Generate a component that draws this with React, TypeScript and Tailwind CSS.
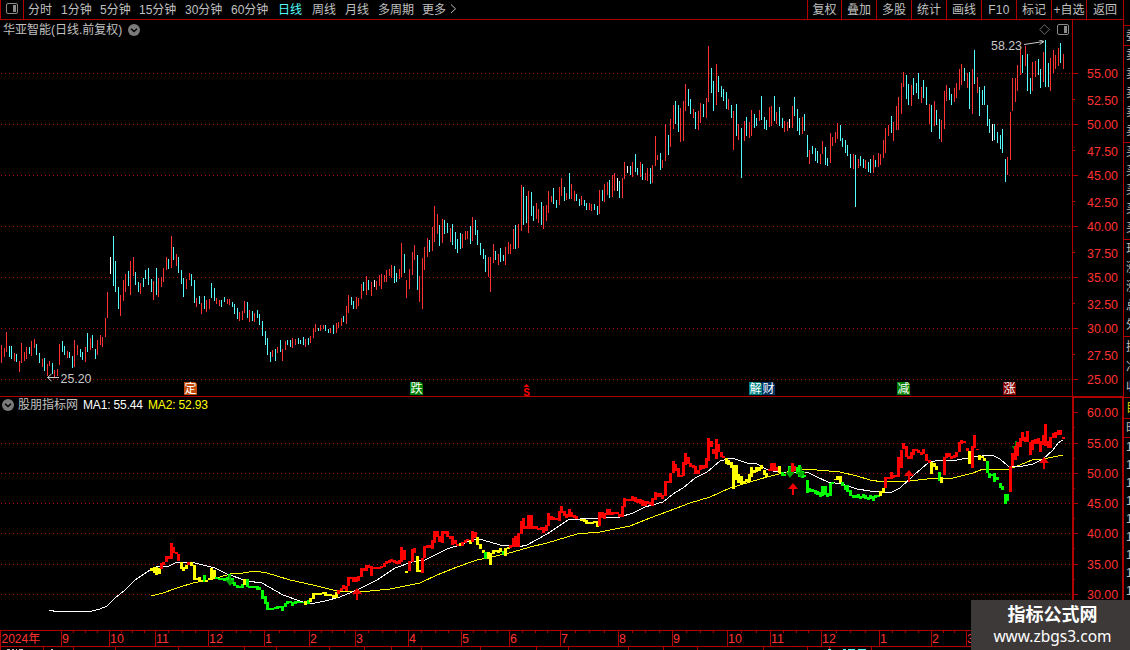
import React from "react";

const SANS = '"Liberation Sans","Noto Sans CJK SC",sans-serif';

// Each entry: colour code, x, high, low
const PRICE = `
r1,345,363 r4,348,357 r6,332,352 c9,346,357 c11,346,359 r14,353,361 c16,354,362 r19,361,372 r21,343,363 r24,352,361
r26,347,359 c29,347,354 r31,341,356 r34,339,348 c36,344,355 c39,353,363 r42,359,367 c44,358,371 r47,364,376 r49,361,366
c52,363,374 r54,370,377 r57,369,376 r59,344,365 c62,341,352 c64,346,355 r67,351,358 c69,352,358 c72,356,368 r74,340,367
r77,345,355 c80,349,357 c82,352,360 r85,347,362 c87,333,352 r90,338,350 c92,335,348 c95,349,359 r97,340,355 r100,335,345
r102,337,347 r105,318,337 r107,292,318 w110,257,274 c113,236,286 c115,261,292 c118,287,309 r120,295,316 r123,280,301
r125,274,292 c128,271,286 r130,261,295 r133,257,276 c135,272,285 c138,282,292 r140,283,294 c143,278,287 c145,270,279
c148,268,285 c151,279,292 r153,281,300 c156,268,295 r158,278,297 r161,277,287 r163,268,282 r166,257,270 c168,259,269
r171,236,268 c173,247,260 r176,254,266 c178,257,273 c181,270,284 c183,278,297 r186,279,289 r189,273,280 c191,274,286
c194,280,303 r196,298,307 c199,296,304 r201,303,314 c204,296,309 r206,300,312 r209,299,309 c211,283,298 c214,288,301
r216,298,304 r219,300,306 c221,300,307 c224,297,302 r227,299,304 r229,299,305 c232,302,307 c234,304,314 c237,308,319
r239,312,321 r242,311,320 r244,301,313 c247,302,318 r249,310,322 c252,311,321 r254,313,322 c257,310,318 c259,314,325
c262,321,336 c265,331,345 c267,338,355 c270,352,362 r272,350,357 c275,349,361 r277,347,353 c280,340,352 r282,349,361
r285,341,350 c287,340,345 c290,340,347 r292,338,348 r295,339,345 c298,338,344 c300,340,344 c303,337,345 r305,339,347
c308,338,345 r310,336,343 r313,328,338 r315,324,332 c318,328,331 r320,325,331 r323,325,329 c325,325,331 c328,329,333
r330,328,333 c333,325,334 r336,323,333 r338,322,328 r341,318,326 c343,316,322 r346,306,324 r348,295,313 c351,297,305
c353,301,309 r356,297,309 r358,298,306 r361,284,299 c363,282,291 r366,276,295 c368,280,290 r371,282,296 w374,280,287
r376,281,290 r379,275,286 r381,274,289 r384,275,282 r386,270,282 r389,269,276 r391,265,278 c394,266,283 c396,273,282
r399,269,279 r401,243,277 c404,254,273 r406,280,298 r409,269,289 r412,252,275 r414,245,260 c417,255,290 r419,276,302
r422,258,309 r424,247,270 r427,238,257 c429,240,252 r432,227,251 r434,206,242 r437,214,234 c439,225,246 r442,219,243
c444,220,234 c447,223,233 r450,228,242 c452,224,245 c455,232,249 c457,239,253 c460,233,249 r462,234,248 r465,231,240
r467,231,239 c470,226,244 r472,217,241 c475,220,235 c477,230,245 c480,243,255 c483,249,259 c485,255,272 r488,257,277
r490,257,292 r493,244,263 c495,251,260 r498,254,265 c500,248,262 c503,255,261 r505,247,265 r508,242,254 r510,244,254
r513,229,249 c515,225,249 r518,224,248 r521,185,231 c523,187,225 c526,196,223 r528,191,233 c531,192,216 c533,206,221
r536,203,219 r538,209,223 c541,202,225 r543,206,229 r546,205,221 r548,191,213 r551,196,202 c553,188,204 c556,200,208
r559,187,205 r561,178,196 c564,187,201 r566,193,200 c569,173,199 r571,184,199 r574,191,201 c576,194,201 c579,199,206
r581,196,205 c584,200,206 c586,203,210 r589,203,210 r591,204,211 c594,204,210 c597,206,215 r599,190,214 c602,190,201
r604,184,202 r607,182,195 c609,180,198 r612,175,197 r614,173,191 w617,178,191 c619,181,198 r622,178,198 r624,162,179
w627,166,173 c630,166,175 r632,162,177 c635,154,172 c637,168,175 r640,162,177 c642,164,180 r645,173,180 r647,168,181
c650,168,184 r652,165,183 r655,136,166 r657,155,160 c660,153,170 r662,160,168 r665,124,161 c668,135,155 r670,119,147
r673,105,129 c675,101,124 c678,105,132 r680,108,142 r683,101,141 r685,84,111 c688,89,106 c690,99,114 r693,109,118
c695,112,129 r698,111,130 r700,103,123 c703,104,117 r706,98,118 r708,46,102 c711,68,93 c713,81,111 r716,64,105
c718,76,92 c721,86,97 c723,89,101 c726,92,109 r728,99,110 c731,105,118 r733,111,150 c736,104,136 r738,124,140
c741,128,178 r744,121,141 c746,117,136 r749,122,138 r751,110,136 c754,114,128 c756,118,126 r759,110,121 c761,96,120
c764,117,129 c766,120,130 r769,107,127 r771,106,126 c774,96,121 r776,112,124 c779,107,126 c782,118,128 r784,121,132
r787,122,131 w789,119,128 r792,106,128 c794,97,116 c797,109,131 c799,118,135 r802,117,134 c804,114,131 c807,135,157
r809,150,164 c812,146,154 c815,148,161 c817,151,163 r820,154,164 r822,141,154 c825,147,165 c827,158,166 r830,133,163
r832,137,146 r835,132,143 r837,123,139 c840,125,141 c842,138,147 c845,140,153 c847,145,156 c850,154,168 r853,154,169
c855,155,207 r858,159,168 c860,156,166 c863,159,168 r865,160,169 c868,162,172 c870,159,173 r873,155,173 c875,160,167
r878,153,167 r880,154,165 r883,140,158 r885,128,153 r888,125,136 c891,116,133 r893,122,141 r896,106,130 r898,97,130
r901,83,114 r903,72,87 c906,75,99 c908,84,105 r911,85,106 c913,78,95 c916,83,93 c918,73,99 r921,87,103 c923,80,98
c926,87,105 r929,104,124 c931,105,132 r934,101,126 c936,110,125 c939,119,139 r941,120,142 r944,91,129 r946,85,101
c949,88,100 c951,94,105 r954,88,102 r956,83,98 r959,69,90 r961,64,85 c964,68,81 r967,73,88 c969,72,109 r972,69,114
c974,50,84 r977,77,93 c979,87,116 c982,90,105 c984,86,105 c987,105,126 c989,119,133 w992,124,141 c994,124,140
c997,132,143 c1000,135,149 c1002,129,153 c1005,159,182 r1007,157,175 r1010,112,160 r1012,78,111 r1015,78,102
r1017,65,91 r1020,49,75 c1022,55,73 r1025,46,66 c1027,54,91 c1030,78,94 r1032,62,91 r1035,61,77 c1038,59,75
c1040,69,88 r1043,52,82 c1045,40,87 c1048,63,87 r1050,58,91 r1053,50,73 r1055,55,69 r1058,48,66 c1060,43,63 r1063,54,69`;

const TREND = `
y151,568,571 y154,567,573 y156,567,575 y159,568,574 r161,563,569 r163,562,565 r166,556,562 r168,556,559 r171,543,559
r173,547,553 r176,552,554 r178,554,561 y181,562,569 y183,567,571 y186,565,569 r188,562,565 y191,562,566 y194,565,580
y196,578,580 y199,577,581 y201,580,582 g204,575,582 y206,580,582 y209,578,580 y211,568,580 y214,570,578 g216,577,579
g219,578,580 g221,578,580 g224,578,581 g227,577,580 g229,574,580 g232,578,584 g234,582,586 g237,585,588 g239,586,588
g242,584,588 y244,579,585 g247,579,587 g249,586,588 g252,586,588 g254,586,588 g257,586,590 g259,587,590 g262,590,599
g265,596,604 g267,602,610 g270,608,610 g272,608,610 g275,607,609 g277,606,609 g280,606,608 g282,606,611 g285,603,607
g287,601,604 g290,601,603 g292,602,606 g295,601,604 g298,601,603 g300,602,603 g303,602,603 y305,601,605 g308,600,604
y310,598,602 y313,593,599 y315,593,595 y318,593,595 y320,593,595 y323,592,594 y325,592,596 y328,594,596 y330,594,596
y333,595,598 y336,592,598 r338,590,594 r341,588,591 r343,585,589 r346,586,591 r348,577,586 r351,577,579 r353,577,582
r356,577,582 r358,576,581 r361,568,577 r363,568,571 r366,565,571 r368,565,568 r371,566,576 r373,567,569 r376,567,569
r379,567,569 r381,566,568 r384,563,567 r386,561,564 r389,560,563 r391,559,562 r394,560,563 r396,561,564 r399,560,564
r401,547,562 r404,550,560 y406,571,573 r409,561,571 r412,549,562 r414,548,553 y417,556,572 y419,570,572 r422,558,573
r424,546,558 r427,545,548 r429,545,548 r432,540,549 r434,531,543 r437,531,537 r439,536,542 r442,531,543 r444,531,534
r447,531,537 r450,536,539 r452,536,545 r455,540,544 r457,544,546 y460,543,546 r462,542,546 r465,540,543 r467,539,541
y470,540,544 r472,531,542 r475,532,538 y477,537,545 y480,544,549 y483,550,553 g485,552,559 y488,552,559 y490,553,565
y493,550,554 y495,550,552 y498,550,553 y500,548,552 g503,551,555 y505,548,556 y508,547,549 r510,545,548 r513,538,547
r515,536,547 r518,533,547 r521,521,534 r523,518,529 r526,526,529 r528,515,529 r531,515,529 r533,526,529 r536,526,529
r538,528,530 r541,527,530 r543,527,533 r546,525,531 r548,513,526 r551,516,520 r553,517,520 r556,518,520 r559,511,521
r561,506,513 r564,511,516 r566,514,518 r569,509,517 r571,512,517 r574,515,518 r576,516,519 y581,519,521 y584,519,522
y586,520,524 y589,522,524 y592,522,524 y594,521,523 y597,521,527 r599,512,526 r602,512,518 r604,513,519 r607,509,515
r609,509,515 r612,512,515 r614,512,514 r617,512,514 r619,514,517 r622,506,517 r624,498,507 r627,499,501 r630,499,501
r632,496,501 r635,497,502 r637,499,503 r640,499,504 r642,500,506 r645,501,506 r647,501,504 r650,502,505 r652,498,506
r655,492,500 r657,493,497 r660,493,497 r662,495,499 r665,481,496 r668,481,483 r670,473,483 r673,461,473 r675,464,471
r678,468,477 r681,475,477 r683,462,476 r685,453,465 r688,457,464 r690,463,467 r693,465,468 r695,466,474 r698,470,474
r700,465,470 r703,465,469 r706,458,468 r708,438,461 r711,441,447 r713,449,454 r716,439,459 r718,444,452 r721,452,457
r723,456,458 y726,458,464 y728,460,465 y731,462,468 y733,465,489 y736,465,480 y738,474,483 y741,476,485 y744,481,484
y746,479,482 y749,474,482 y751,467,477 y754,470,473 y756,467,472 y759,467,471 y761,465,469 y764,470,475 y766,473,477
r769,469,471 r771,463,471 r774,463,471 r776,467,471 y779,466,473 g782,472,476 g784,474,476 g789,466,474 r792,463,474
r794,466,471 g797,467,474 g799,465,477 g802,471,478 g804,475,477 g807,480,493 g809,488,492 g812,489,492 g815,490,494
g817,491,495 g820,492,497 g822,486,496 g825,486,495 g827,493,497 g830,483,496 g832,482,484 y835,479,480 y837,476,480
y840,476,483 g842,482,486 g845,485,490 g847,485,492 g850,490,496 g853,495,498 g855,495,498 g858,494,498 g860,496,499
g863,494,498 g865,495,499 g868,497,500 g870,495,499 g873,496,501 g875,495,498 g878,495,497 y880,491,496 y883,488,493
r885,477,488 r888,477,479 r891,472,479 r893,475,478 r896,475,477 r898,457,477 r901,450,468 r903,443,449 r906,446,457
r908,456,459 r911,452,459 r913,449,455 r916,449,451 r918,450,453 r921,452,455 r923,449,454 r926,454,461 r929,460,463
y931,462,474 y934,463,467 y936,466,470 g939,472,481 y941,477,483 r944,457,475 r946,453,458 r949,453,457 r951,456,459
r954,455,458 r956,452,457 r959,442,452 r961,440,444 r964,441,443 r967,448,451 y969,451,464 r972,446,468 r974,435,448
r977,449,450 y979,455,460 y982,456,458 y984,458,461 g987,461,473 g989,473,478 g992,474,476 g994,473,482 g997,477,480
g1000,483,488 g1002,486,490 g1005,494,504 g1007,494,501 r1010,466,492 r1012,453,466 r1015,446,460 r1017,442,456
r1020,438,447 r1022,432,441 r1025,437,442 r1027,431,442 r1030,442,455 r1032,440,450 r1035,439,444 r1038,438,444
r1040,441,452 r1043,435,445 r1045,424,446 r1048,441,448 r1050,437,448 r1053,433,438 r1055,432,438 r1058,430,435
r1060,430,435 r1063,437,439`;

const MA_FAST =
  "49,610 58,612 82,611 88,612 100,609 107,606 115,598 125,590 135,580 150,570 158,566 167,567 177,562 195,563 203,565 215,568 227,574 247,581 262,583 283,595 300,601 310,604 325,601 340,597 357,590 377,580 395,568 412,562 425,560 447,549 463,544 473,539 483,540 500,545 518,547 527,545 547,534 568,520 580,519 620,517 633,513 645,507 663,502 673,494 683,488 695,478 707,472 720,461 732,458 747,463 757,464 768,470 783,473 807,472 817,477 828,482 842,484 857,489 870,491 890,493 900,488 915,474 928,463 935,461 957,460 973,457 992,455 1000,459 1008,466 1018,467 1033,464 1043,459 1053,450 1058,443 1063,440";
const MA_SLOW =
  "151,596 163,593 177,588 193,583 213,579 230,574 243,573 255,571 267,573 290,580 313,585 337,591 350,592 370,591 390,589 420,583 437,575 457,567 477,560 487,558 513,552 530,547 547,543 577,534 600,532 630,526 650,518 677,508 690,503 710,497 730,488 750,482 767,477 787,472 803,469 817,470 840,472 857,476 870,480 883,482 910,481 927,479 953,478 973,473 983,469 1007,470 1020,465 1032,460 1043,459 1063,455";

const PRICE_COLORS: Record<string, string> = { r: "#ff3232", c: "#54fcfc", w: "#ffffff" };
const TREND_COLORS: Record<string, string> = { r: "#ff0000", y: "#ffff00", g: "#00ff00" };

type Bar = { k: string; x: number; a: number; b: number };
const parse = (s: string): Bar[] =>
  s.trim().split(/\s+/).map((t) => {
    const [x, a, b] = t.slice(1).split(",").map(Number);
    return { k: t[0], x, a, b };
  });

const priceBars = parse(PRICE);
const trendBars = parse(TREND);

const periods: [string, string][] = [
  ["分时", "w-[33px]"],
  ["1分钟", "w-[39px]"],
  ["5分钟", "w-[39px]"],
  ["15分钟", "w-[46px]"],
  ["30分钟", "w-[46px]"],
  ["60分钟", "w-[47px]"],
  ["日线", "w-[34px]"],
  ["周线", "w-[33px]"],
  ["月线", "w-[33px]"],
  ["多周期", "w-[44px]"],
  ["更多", "w-[27px]"],
];

const tools = ["复权", "叠加", "多股", "统计", "画线", "F10", "标记", "+自选", "返回"];

const months: [number, string][] = [
  [61, "9"], [109, "10"], [155, "11"], [208, "12"], [264, "1"], [309, "2"], [355, "3"], [408, "4"], [461, "5"],
  [509, "6"], [560, "7"], [618, "8"], [672, "9"], [727, "10"], [770, "11"], [821, "12"], [879, "1"], [931, "2"], [966, "3"],
];

const badges: [number, string, string][] = [
  [184, "定", "#c04a08"],
  [410, "跌", "#008000"],
  [749, "解", "#008080"],
  [762, "财", "#003366"],
  [897, "减", "#008000"],
  [1003, "涨", "#800000"],
];

function Grid({ ys }: { ys: number[] }) {
  return (
    <>
      {ys.map((y) => (
        <line key={y} x1={1} x2={1072} y1={y + 0.5} y2={y + 0.5} stroke="#b00808" strokeDasharray="1 3" />
      ))}
    </>
  );
}

function RoundToggle() {
  return (
    <svg width="12" height="12" viewBox="0 0 12 12" className="shrink-0">
      <circle cx="6" cy="6" r="6" fill="#7b7b7b" />
      <path d="M3 4.7 6 7.5 9 4.7" fill="none" stroke="#000" strokeWidth="1.5" />
    </svg>
  );
}

function PanelIcon() {
  return (
    <svg width="12" height="11" viewBox="0 0 12 11" className="shrink-0">
      <rect x="0.5" y="0.5" width="11" height="10" rx="1.5" fill="none" stroke="#8a8a8a" />
      <rect x="7" y="2" width="3" height="7" fill="#8a8a8a" />
    </svg>
  );
}

function Toolbar() {
  return (
    <header className="flex h-5 shrink-0 border-b border-[#b00000] text-xs leading-5 text-[#c0c0c0]">
      <div className="flex w-6 items-center justify-center border-x border-[#b00000] pb-0.5">
        <PanelIcon />
      </div>
      <nav className="flex pl-1">
        {periods.map(([t, w]) => (
          <span key={t} className={`h-[19px] shrink-0 whitespace-nowrap ${w} ${t === "日线" ? "text-[#54fcfc]" : ""}`}>
            {t}
          </span>
        ))}
        <svg width="8" height="18" viewBox="0 0 8 18" fill="none" stroke="#c0c0c0">
          <path d="M2 4.5 6.5 8.8 2 13" />
        </svg>
      </nav>
      <div className="ml-auto flex">
        {tools.map((t, i) => (
          <span
            key={t}
            className={`h-[19px] whitespace-nowrap border-l border-[#b00000] text-center ${i === 0 ? "w-[34px]" : i === 8 ? "w-[37px]" : "w-[35px]"} ${t === "F10" ? "tracking-wide" : ""}`}
          >
            {t}
          </span>
        ))}
      </div>
    </header>
  );
}

function PriceAxis() {
  const labels: [string, number][] = [
    ["55.00", 73], ["52.50", 100], ["50.00", 124], ["47.50", 151], ["45.00", 175], ["42.50", 202], ["40.00", 226],
    ["37.50", 253], ["35.00", 277], ["32.50", 304], ["30.00", 328], ["27.50", 355], ["25.00", 379],
  ];
  return (
    <svg width="51" height="377" viewBox="1072 20 51 377" className="shrink-0" fill="#ff3232" fontSize="12.4">
      <rect x="1072" y="20" width="1" height="377" fill="#b00000" />
      <rect x="1072" y="396" width="51" height="1" fill="#b00000" />
      {labels.map(([t, y], i) => (
        <g key={t}>
          <rect x="1073" y={i % 2 ? y - 1 : y} width={i % 2 ? 2 : 5} height="1" fill="#b00000" />
          <text x="1087" y={y + 5}>{t}</text>
        </g>
      ))}
    </svg>
  );
}

function TrendAxis() {
  const ys = [412, 443, 473, 503, 533, 564, 594];
  return (
    <svg width="51" height="233" viewBox="1072 397 51 233" className="shrink-0" fill="#ff3232" fontSize="12.4">
      <rect x="1072" y="397" width="2" height="233" fill="#b00000" />
      <rect x="1072" y="397" width="51" height="1" fill="#b00000" />
      <rect x="1122" y="397" width="1" height="233" fill="#b00000" />
      {ys.map((y, i) => (
        <g key={y}>
          <rect x="1074" y={y} width="4" height="1" fill="#b00000" />
          <rect x="1074" y={y + 15} width="1" height="1" fill="#b00000" />
          <text x="1087" y={y + 5}>{60 - i * 5}.00</text>
        </g>
      ))}
    </svg>
  );
}

function PricePanel() {
  return (
    <section className="flex h-[377px] shrink-0">
      <div className="flex w-[1072px] flex-col">
        <div className="flex h-5 items-center pb-px pl-[3px] pr-[3px] text-xs text-[#c0c0c0]">
          <span className="mr-[6px] leading-5">华亚智能(日线.前复权)</span>
          <RoundToggle />
          <svg width="11" height="11" viewBox="0 0 11 11" className="ml-auto mr-[7px]" fill="none" stroke="#6d6d6d">
            <path d="M5.5.7 10.3 5.5 5.5 10.3.7 5.5Z" />
          </svg>
          <PanelIcon />
        </div>
        <svg width="1072" height="357" viewBox="0 40 1072 357" fontSize="12.4">
          <Grid ys={[73, 124, 175, 226, 277, 328, 379]} />
          <g shapeRendering="crispEdges">
            {priceBars.map((b, i) => (
              <rect key={i} x={b.x} y={b.a} width={1} height={b.b - b.a} fill={PRICE_COLORS[b.k]} />
            ))}
          </g>
          <g fill="none" stroke="#c8c8c8">
            <path d="M47.500 377.500H59M51.500 374 47.500 377.500 51.500 381" />
            <path d="M1024 44.500 1044 41.500M1038 39.500 1044 41.500 1039.500 44.500" />
          </g>
          <text x="60.500" y="383" fill="#c8c8c8">25.20</text>
          <text x="991" y="50" fill="#c8c8c8">58.23</text>
          {badges.map(([x, t, c]) => (
            <g key={t}>
              <path d={`M${x} 382h11l2 2v11h-13z`} fill={c} />
              <text x={x + 0.5} y="393" fontSize="12" fill="#fff">{t}</text>
            </g>
          ))}
          <path d="M523.500 387 526.500 384 529.500 387Z" fill="#ff0000" />
          <text x="523.300" y="395.500" fontSize="10" fontWeight="bold" fill="#ff0000">S</text>
          <rect x="0" y="396" width="1072" height="1" fill="#b00000" />
        </svg>
      </div>
      <PriceAxis />
    </section>
  );
}

function TrendPanel() {
  return (
    <section className="flex h-[233px] shrink-0">
      <div className="flex w-[1072px] flex-col">
        <div className="flex h-5 items-center gap-[5px] pb-1 pl-[2px] text-xs leading-4">
          <RoundToggle />
          <div className="flex whitespace-nowrap">
            <span className="w-[65px] -ml-px text-[#c0c0c0]">股朋指标网</span>
            <span className="w-[65px] tracking-[-0.15px] text-white">MA1: 55.44</span>
            <span className="tracking-[-0.15px] text-[#ffff00]">MA2: 52.93</span>
          </div>
        </div>
        <svg width="1072" height="213" viewBox="0 417 1072 213">
          <Grid ys={[443, 473, 503, 533, 564, 594]} />
          <g fill="none" shapeRendering="crispEdges">
            <polyline points={MA_SLOW} stroke="#ffff00" />
            <polyline points={MA_FAST} stroke="#ffffff" />
          </g>
          <g fill="#009000">
            <path d="M1015 441h2v5h3.500l-4.500 6-4.500-6h3.500z" />
          </g>
          <g shapeRendering="crispEdges">
            {trendBars.map((b, i) => (
              <rect key={i} x={b.x - 1} y={b.a} width={3} height={b.b - b.a} fill={TREND_COLORS[b.k]} />
            ))}
          </g>
          <g fill="#00a800">
            {[[230, 575], [790, 467], [801, 467]].map(([x, y]) => (
              <path key={x} d={`M${x - 1} ${y}h2v5h3.500l-4.500 6-4.500-6h3.500z`} />
            ))}
          </g>
          <g fill="#f00000">
            {[[357, 588], [793, 483], [909, 470], [1044, 457]].map(([x, y]) => (
              <path key={x} d={`M${x} ${y}l5 6h-4v6h-2v-6h-4z`} />
            ))}
          </g>
        </svg>
      </div>
      <TrendAxis />
    </section>
  );
}

function Timeline() {
  const ticks: number[] = [];
  months.forEach(([x], i) => {
    const next = months[i + 1]?.[0] ?? 1010;
    const n = Math.round((next - x) / 13);
    for (let j = 1; j < n; j++) ticks.push(Math.round(x + ((next - x) * j) / n));
  });
  const lower = [0, 43, 73, 115, 178, 244, 276, 329, 364, 391, 421, 480, 536, 568, 628, 663, 697, 763, 807, 829, 871];
  return (
    <svg width="1123" height="20" viewBox="0 630 1123 20" className="shrink-0" fontSize="12.4">
      <g fill="#b00000">
        <rect x="0" y="630" width="1123" height="1" />
        <rect x="0" y="646" width="1123" height="1" />
        <rect x="0" y="630" width="1" height="17" />
        {months.map(([x]) => <rect key={x} x={x} y="630" width="1" height="16" />)}
        {ticks.map((x) => <rect key={x} x={x} y="631" width="1" height="2" />)}
        {lower.map((x) => <rect key={x} x={x} y="647" width="1" height="3" />)}
      </g>
      <g fill="#ff3232">
        <text x="1.500" y="643" fontSize="12">2024年</text>
        {months.map(([x, t]) => <text key={x} x={x + 1} y="643">{t}</text>)}
      </g>
      <path d="M7 649.500h3m2 0h2m2 0h1m2 0h4m28 0h2" stroke="#c0c0c0" />
      <path d="M828 649.500h3m12 0h3m2 0h7m3 0h8" stroke="#54fcfc" />
    </svg>
  );
}

function SideGroup({ chars, box, row }: { chars: string[]; box: string; row: string }) {
  return (
    <div className={`flex shrink-0 flex-col overflow-hidden border-b border-[#b00000] ${box}`}>
      {chars.map((c, i) => (
        <span key={i} className={`shrink-0 pl-0.5 ${row}`}>{c}</span>
      ))}
    </div>
  );
}

function SideStrip() {
  return (
    <aside className="flex w-[7px] shrink-0 flex-col overflow-hidden border-l border-[#b00000] text-xs text-[#c0c0c0]">
      <SideGroup chars={[]} box="h-[26px]" row="" />
      <SideGroup chars={["委"]} box="h-5" row="h-5 leading-5" />
      <SideGroup chars={["卖", "卖", "卖", "卖", "卖"]} box="h-[97px]" row="h-[19px] leading-[19px]" />
      <SideGroup chars={["买", "买", "买", "买", "买"]} box="h-[97px]" row="h-[19px] leading-[19px]" />
      <SideGroup chars={["现", "涨", "涨", "总", "外"]} box="h-[97px]" row="h-[19px] leading-[19px]" />
      <SideGroup chars={["换", "净", "收"]} box="h-[61px]" row="h-5 leading-5" />
      <SideGroup chars={["目"]} box="h-[21px] text-[#d0d000]" row="h-[21px] leading-[21px]" />
      <SideGroup chars={["时"]} box="h-[19px]" row="h-[19px] leading-[19px]" />
      <div className="flex flex-col pl-px">
        {Array.from({ length: 9 }, (_, i) => (
          <span key={i} className="h-[18px] shrink-0 pl-px leading-[18px]">1</span>
        ))}
      </div>
    </aside>
  );
}

export default function App() {
  return (
    <div className="relative flex h-[650px] w-[1130px] overflow-hidden bg-black" style={{ fontFamily: SANS }}>
      <main className="flex w-[1123px] shrink-0 flex-col">
        <Toolbar />
        <PricePanel />
        <TrendPanel />
        <Timeline />
      </main>
      <SideStrip />
      <div className="absolute bottom-0 right-0 flex h-[50px] w-[159px] flex-col items-center bg-[#3d3939] pl-1 text-white">
        <span className="mt-[3px] text-[18px] font-bold leading-[25px]">指标公式网</span>
        <span className="whitespace-nowrap font-['Noto_Sans'] text-[15.500px] leading-[16px]">www.zbgs3.com</span>
      </div>
    </div>
  );
}
